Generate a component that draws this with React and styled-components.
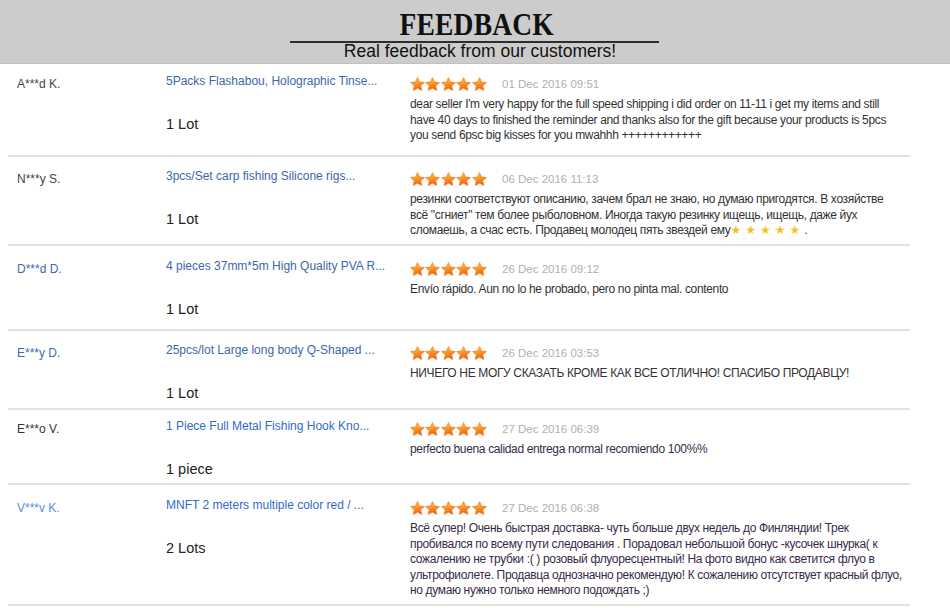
import React from "react";
import styled, { createGlobalStyle } from "styled-components";

const Global = createGlobalStyle`
  html, body { margin: 0; padding: 0; background: #ffffff; }
  body { font-family: "Liberation Sans", Arial, sans-serif; }
`;

const Page = styled.div`
  width: 950px;
  height: 608px;
  overflow: hidden;
  background: #ffffff;
`;

const Header = styled.header`
  height: 64px;
  box-sizing: border-box;
  background: #cdcccd;
  border-bottom: 1px solid #c2c1c2;
  display: flex;
  flex-direction: column;
  align-items: center;
  padding: 9px 0 0 4px;
`;

const Title = styled.h1`
  margin: 0;
  font-family: "Liberation Serif", "Times New Roman", serif;
  font-weight: 700;
  font-size: 32px;
  line-height: 31px;
  color: #111;
  letter-spacing: 0.2px;
  transform: scaleX(0.86);
`;

const Rule = styled.div`
  width: 369px;
  height: 2px;
  margin: 1px 0 0 -6px;
  background: #2d2d2d;
`;

const Subtitle = styled.p`
  margin: 0 0 0 6px;
  font-family: "Liberation Sans", Arial, sans-serif;
  font-size: 17.5px;
  line-height: 17.5px;
  letter-spacing: 0px;
  color: #111;
`;

const List = styled.div`
  width: 902px;
  margin-left: 8px;
`;

const Row = styled.div`
  display: grid;
  grid-template-columns: 149px 244px 1fr;
  box-sizing: border-box;
  height: ${(p) => p.$h}px;
  padding: ${(p) => p.$top - 4}px 0 0 9px;
  border-bottom: 2px solid #e1e1e1;
  overflow: hidden;
`;

const NameCol = styled.div`
  padding-top: 3px;
  font-size: 12px;
  line-height: 16px;
  color: ${(p) => p.$color};
  white-space: nowrap;
`;

const ProductCol = styled.div`
  display: flex;
  flex-direction: column;
  align-items: flex-start;
`;

const ProductLink = styled.a`
  font-size: 12px;
  line-height: 16px;
  color: ${(p) => p.$color};
  text-decoration: none;
  white-space: nowrap;
`;

const Quantity = styled.div`
  margin-top: 26px;
  font-size: 14.5px;
  line-height: 18px;
  color: #222;
`;

const ReviewCol = styled.div`
  padding-top: 4px;
`;

const RatingLine = styled.div`
  display: flex;
  align-items: center;
  height: 14px;
`;

const Stars = styled.div`
  display: flex;
  gap: 0.4px;
  width: 92px;
`;

const DateText = styled.span`
  font-size: 11.5px;
  line-height: 14px;
  color: #b0b0b0;
  white-space: nowrap;
`;

const Comment = styled.div`
  margin-top: 6px;
  font-size: 12px;
  line-height: 15.5px;
  letter-spacing: -0.35px;
  color: ${(p) => p.$color};
`;

const CommentLine = styled.div`
  white-space: nowrap;
`;

const GoldStars = styled.span`
  font-family: "DejaVu Sans", sans-serif;
  font-size: 12px;
  letter-spacing: 4px;
  color: #f2c21a;
`;

const Star = ({ id }) => (
  <svg width="15" height="14" viewBox="0 0 15 14">
    <defs>
      <linearGradient id={id} x1="0.2" y1="0" x2="0.5" y2="1">
        <stop offset="0" stopColor="#ffd25a" />
        <stop offset="0.45" stopColor="#fc9a2c" />
        <stop offset="1" stopColor="#ec5a12" />
      </linearGradient>
    </defs>
    <polygon
      points="7.5,0.6 9.5,5.05 14.4,5.5 10.73,8.85 11.8,13.5 7.5,11.2 3.2,13.5 4.27,8.85 0.6,5.5 5.5,5.05"
      fill={`url(#${id})`}
      stroke="#f28324"
      strokeWidth="0.8"
      strokeLinejoin="round"
    />
  </svg>
);

const reviews = [
  {
    h: 93,
    top: 13,
    name: "A***d K.",
    nameColor: "#444",
    product: "5Packs Flashabou, Holographic Tinse...",
    productColor: "#3c67aa",
    qty: "1 Lot",
    date: "01 Dec 2016 09:51",
    textColor: "#333",
    lines: [
      "dear seller I'm very happy for the full speed shipping i did order on 11-11 i get my items and still",
      "have 40 days to finished the reminder and thanks also for the gift because your products is 5pcs",
      "you send 6psc big kisses for you mwahhh ++++++++++++",
    ],
  },
  {
    h: 89,
    top: 15,
    name: "N***y S.",
    nameColor: "#444",
    product: "3pcs/Set carp fishing Silicone rigs...",
    productColor: "#3c67aa",
    qty: "1 Lot",
    date: "06 Dec 2016 11:13",
    textColor: "#333",
    lines: [
      "резинки соответствуют описанию, зачем брал не знаю, но думаю пригодятся. В хозяйстве",
      "всё \"сгниет\" тем более рыболовном. Иногда такую резинку ищещь, ищещь, даже йух",
      "LAST",
    ],
  },
  {
    h: 85,
    top: 16,
    name: "D***d D.",
    nameColor: "#3d69b0",
    product: "4 pieces 37mm*5m High Quality PVA R...",
    productColor: "#3c67aa",
    qty: "1 Lot",
    date: "26 Dec 2016 09:12",
    textColor: "#333",
    lines: ["Envío rápido. Aun no lo he probado, pero no pinta mal. contento"],
  },
  {
    h: 79,
    top: 15,
    name: "E***y D.",
    nameColor: "#3d69b0",
    product: "25pcs/lot Large long body Q-Shaped ...",
    productColor: "#3c67aa",
    qty: "1 Lot",
    date: "26 Dec 2016 03:53",
    textColor: "#333",
    lines: ["НИЧЕГО НЕ МОГУ СКАЗАТЬ КРОМЕ КАК ВСЕ ОТЛИЧНО! СПАСИБО ПРОДАВЦУ!"],
  },
  {
    h: 75,
    top: 12,
    name: "E***o V.",
    nameColor: "#3a2f3c",
    product: "1 Piece Full Metal Fishing Hook Kno...",
    productColor: "#2f6cc8",
    qty: "1 piece",
    date: "27 Dec 2016 06:39",
    textColor: "#3a2a48",
    lines: ["perfecto buena calidad entrega normal recomiendo 100%%"],
  },
  {
    h: 121,
    top: 16,
    name: "V***v K.",
    nameColor: "#5a8be0",
    product: "MNFT 2 meters multiple color red / ...",
    productColor: "#2f6cc8",
    qty: "2 Lots",
    date: "27 Dec 2016 06:38",
    textColor: "#3a2a48",
    lines: [
      "Всё супер! Очень быстрая доставка- чуть больше двух недель до Финляндии! Трек",
      "пробивался по всему пути следования . Порадовал небольшой бонус -кусочек шнурка( к",
      "сожалению не трубки :( ) розовый флуоресцентный! На фото видно как светится флуо в",
      "ультрофиолете. Продавца однозначно рекомендую! К сожалению отсутствует красный флуо,",
      "но думаю нужно только немного подождать ;)",
    ],
  },
];

export default function App() {
  return (
    <Page>
      <Global />
      <Header>
        <Title>FEEDBACK</Title>
        <Rule />
        <Subtitle>Real feedback from our customers!</Subtitle>
      </Header>
      <List>
        {reviews.map((r, i) => (
          <Row key={i} $h={r.h} $top={r.top}>
            <NameCol $color={r.nameColor}>{r.name}</NameCol>
            <ProductCol>
              <ProductLink href="#" $color={r.productColor}>
                {r.product}
              </ProductLink>
              <Quantity>{r.qty}</Quantity>
            </ProductCol>
            <ReviewCol>
              <RatingLine>
                <Stars>
                  {[0, 1, 2, 3, 4].map((s) => (
                    <Star key={s} id={`g${i}-${s}`} />
                  ))}
                </Stars>
                <DateText>{r.date}</DateText>
              </RatingLine>
              <Comment $color={r.textColor}>
                {r.lines.map((l, k) =>
                  l === "LAST" ? (
                    <CommentLine key={k}>
                      сломаешь, а счас есть. Продавец молодец пять звездей ему
                      <GoldStars>★★★★★</GoldStars>.
                    </CommentLine>
                  ) : (
                    <CommentLine key={k}>{l}</CommentLine>
                  )
                )}
              </Comment>
            </ReviewCol>
          </Row>
        ))}
      </List>
    </Page>
  );
}
